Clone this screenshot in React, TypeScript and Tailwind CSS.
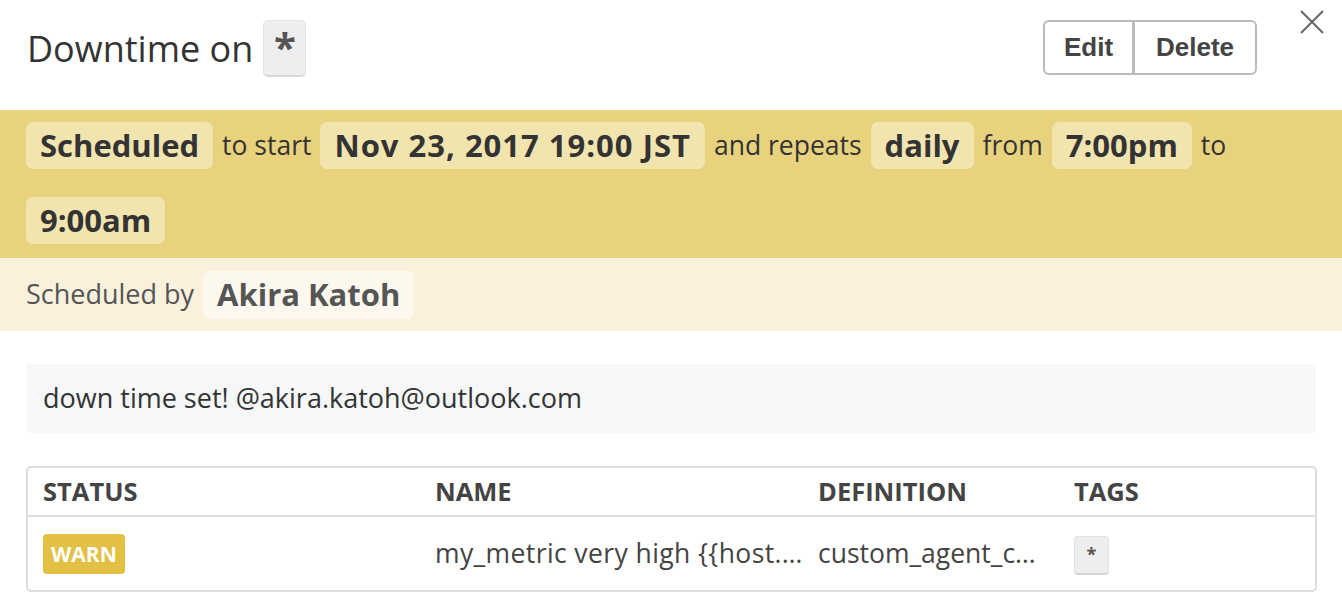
import React from "react";

const Chip = ({ children, className = "" }: { children: React.ReactNode; className?: string }) => (
  <span className={`inline-flex items-center h-[47px] px-[14px] rounded-[7px] font-bold text-[31px] ${className}`}>{children}</span>
);

export default function App() {
  return (
    <div className="w-[1342px] h-[602px] bg-white overflow-hidden" style={{ fontFamily: '"Open Sans", sans-serif' }}>
      {/* Header */}
      <div className="relative flex items-start justify-between h-[110px] pt-[20px] pl-[27px] pr-[85px]">
        <div className="flex items-center gap-[10px] h-[57px]">
          <span className="text-[36px] text-[#333] leading-none">Downtime on</span>
          <span className="flex items-start justify-center w-[43px] h-[57px] rounded-[5px] bg-[#eeeeee] border border-[#e2e2e2] border-b-[2px] border-b-[#d8d8d8] text-[40px] font-bold leading-[52px] text-[#555]">*</span>
        </div>
        <div className="flex h-[55px] border-[2px] border-[#bbbbbb] rounded-[6px] overflow-hidden" style={{ fontFamily: '"Liberation Sans", Arial, sans-serif' }}>
          <button className="w-[90px] flex items-center justify-center text-[26px] font-bold text-[#444] border-r-[3px] border-[#bbbbbb]">Edit</button>
          <button className="w-[120px] flex items-center justify-center text-[26px] font-bold text-[#444]">Delete</button>
        </div>
        <svg className="absolute right-[18px] top-[10px]" width="24" height="24" viewBox="0 0 24 24">
          <path d="M1 1 L23 23 M23 1 L1 23" stroke="#666" strokeWidth="2" />
        </svg>
      </div>

      {/* Yellow schedule band */}
      <div className="bg-[#e8d27d] pt-[12px] pb-[14px] px-[26px] text-[#333]">
        <div className="flex flex-wrap items-center gap-x-[9px] gap-y-[28px] text-[26.5px]">
          <Chip className="bg-[#f2e4ae]">Scheduled</Chip>
          <span>to start</span>
          <Chip className="bg-[#f2e4ae] tracking-[1px]">Nov 23, 2017 19:00 JST</Chip>
          <span>and repeats</span>
          <Chip className="bg-[#f2e4ae]">daily</Chip>
          <span>from</span>
          <Chip className="bg-[#f2e4ae]">7:00pm</Chip>
          <span>to</span>
          <Chip className="bg-[#f2e4ae]">9:00am</Chip>
        </div>
      </div>

      {/* Scheduled by */}
      <div className="bg-[#f9f1dc] h-[73px] flex items-center px-[26px] gap-[9px]">
        <span className="text-[27px] text-[#555]">Scheduled by</span>
        <Chip className="bg-[#fcf8ee] text-[#555] h-[48px]">Akira Katoh</Chip>
      </div>

      {/* Note */}
      <div className="px-[26px] pt-[33px]">
        <div className="bg-[#f6f7f9] rounded-[4px] h-[69px] flex items-center px-[17px] text-[27px] text-[#333]">
          down time set! @akira.katoh@outlook.com
        </div>
      </div>

      {/* Table */}
      <div className="px-[26px] pt-[33px]">
        <div className="border-[2px] border-[#dddddd] rounded-[5px] w-[1291px]">
          <div className="grid grid-cols-[392px_383px_256px_1fr] h-[49px] items-center border-b-[2px] border-[#dddddd] text-[25.5px] font-bold text-[#444]">
            <div className="pl-[15px]">STATUS</div>
            <div className="pl-[15px]">NAME</div>
            <div className="pl-[15px]">DEFINITION</div>
            <div className="pl-[15px]">TAGS</div>
          </div>
          <div className="grid grid-cols-[392px_383px_256px_1fr] h-[73px] items-center text-[26.5px] text-[#444]">
            <div className="pl-[15px]">
              <span className="inline-flex items-center h-[40px] px-[8px] rounded-[4px] bg-[#e2c043] text-white font-bold text-[21px]">WARN</span>
            </div>
            <div className="pl-[15px] whitespace-nowrap tracking-[0.4px]">my_metric very high {"{{"}host.…</div>
            <div className="pl-[15px] whitespace-nowrap">custom_agent_c…</div>
            <div className="pl-[15px]">
              <span className="inline-flex items-start justify-center w-[35px] h-[39px] rounded-[4px] bg-[#eeeeee] border border-[#e2e2e2] border-b-[2px] border-b-[#d5d5d5] text-[18px] font-bold text-[#555] pt-[4px]">*</span>
            </div>
          </div>
        </div>
      </div>
    </div>
  );
}
